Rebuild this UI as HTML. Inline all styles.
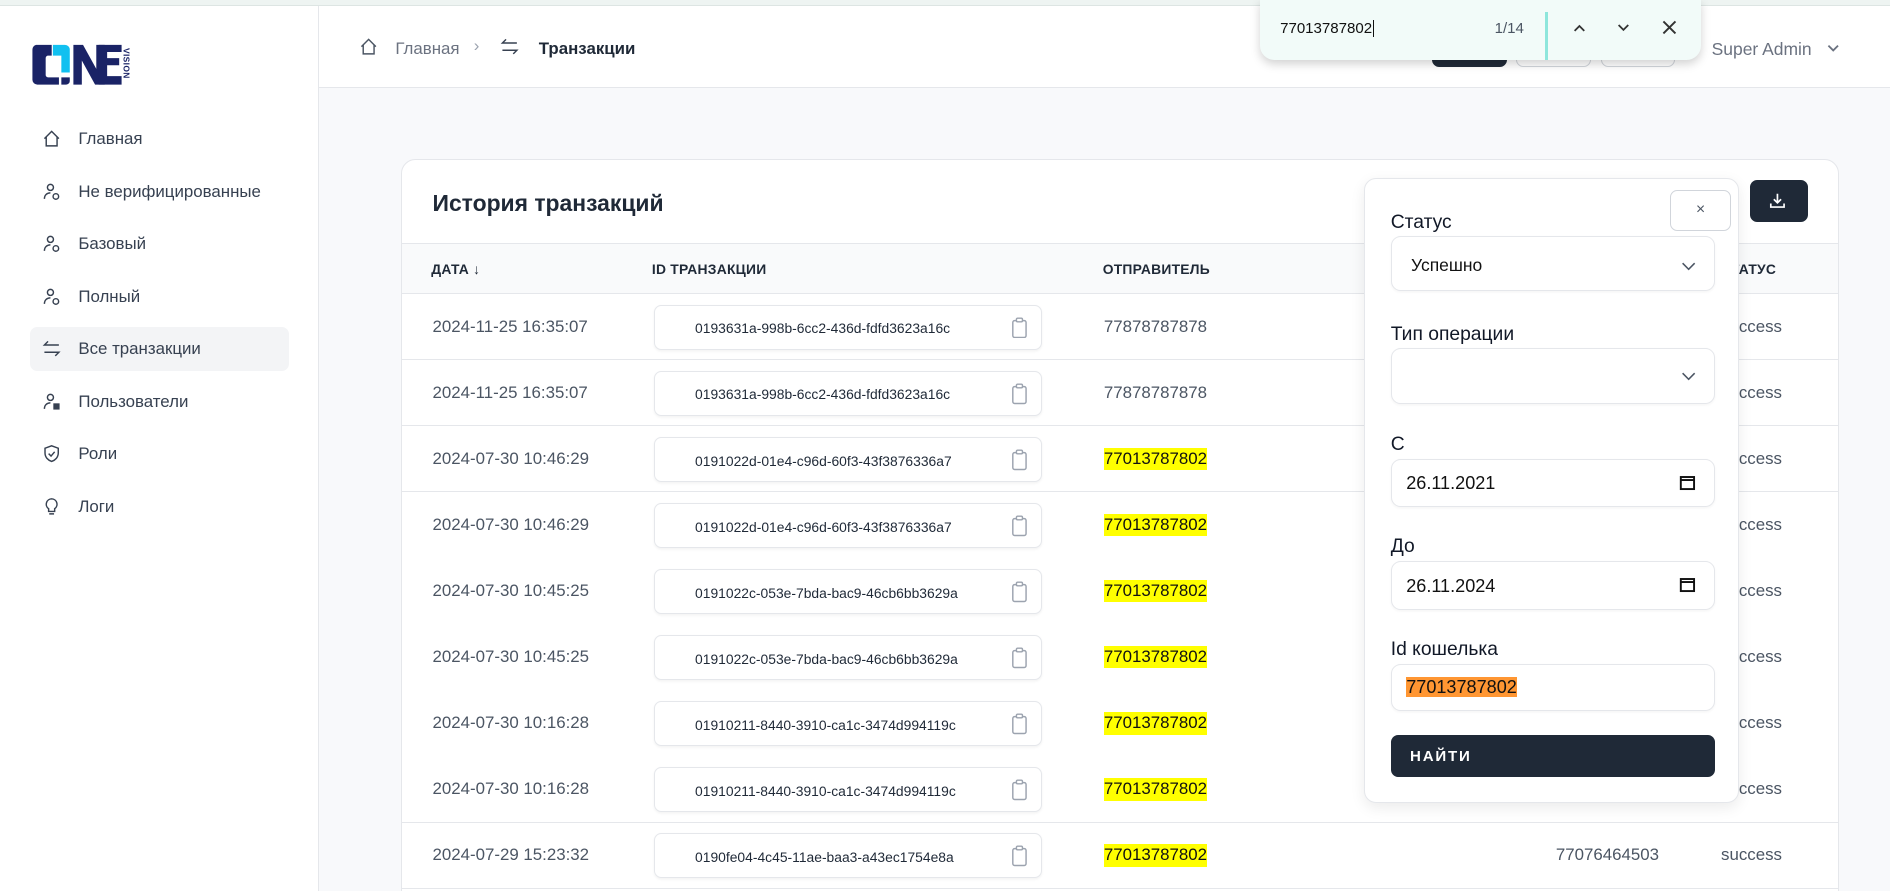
<!DOCTYPE html>
<html><head><meta charset="utf-8"><style>
*{box-sizing:border-box;margin:0;padding:0}
html,body{width:1890px;height:891px;overflow:hidden;background:#f8f9fb}
#w{zoom:1.20536;width:1568px;height:740px;position:relative;font-family:"Liberation Sans","Noto Sans CJK SC",sans-serif;color:#374151;overflow:hidden}
.a{position:absolute}
.top{left:0;top:0;width:1568px;height:5px;background:#eef4f2;border-bottom:1px solid #dde5e3}
.side{left:0;top:5px;width:265px;height:740px;background:#fff;border-right:1px solid #e5e7eb}
.nav{left:35px;font-size:14px;color:#374151;display:flex;align-items:center;gap:14px}
.nav svg{width:16px;height:16px}
.act{left:25px;top:271px;width:215px;height:37px;background:#f3f4f6;border-radius:6px}
.hdr{left:265px;top:5px;width:1303px;height:68px;background:#fff;border-bottom:1px solid #e5e7eb}
.card{left:333px;top:132px;width:1193px;height:640px;background:#fff;border:1px solid #e5e7eb;border-radius:12px;overflow:hidden}
.th{left:0;top:69px;width:1193px;height:42px;background:#f9fafb;border-top:1px solid #e5e7eb;border-bottom:1px solid #e5e7eb}
.th span{position:absolute;top:14px;font-size:11.5px;font-weight:bold;color:#1f2937;letter-spacing:.2px}
.row{left:0;width:1193px;height:55px;border-bottom:1px solid #e5e7eb}
.row .d{position:absolute;left:25px;top:19px;font-size:14px;color:#4b5563}
.row .id{position:absolute;left:209px;top:9px;width:322px;height:37px;border:1px solid #e5e7eb;border-radius:6px;box-shadow:0 1px 2px rgba(0,0,0,.05);font-size:11.5px;color:#1f2937;padding:12px 0 0 0;text-indent:33px}
.row .id svg{position:absolute;right:11px;top:9px}
.row .s{position:absolute;left:582px;top:19px;font-size:14px;color:#4b5563}
.row .s.h{color:#111;background:#ffff00;top:18px;padding:1px 0}
.row .r{position:absolute;left:957px;top:19px;font-size:14px;color:#4b5563}
.row .st{position:absolute;left:1094px;top:19px;font-size:14px;color:#4b5563}
.panel{left:1132px;top:148px;width:311px;height:518px;background:#fff;border:1px solid #e5e7eb;border-radius:10px;box-shadow:0 4px 12px rgba(0,0,0,.08)}
.lbl{left:21px;font-size:16px;color:#111827}
.inp{left:21px;width:269px;background:#fff;border:1px solid #e5e7eb;border-radius:8px;box-shadow:0 1px 2px rgba(0,0,0,.04);font-size:14.5px;color:#111}
.find{left:1045px;top:0;width:366px;height:50px;background:#f2fbf9;border-radius:0 0 12px 12px;box-shadow:0 3px 8px rgba(0,0,0,.18)}
</style></head><body><div id="w">
<div class="a top"></div>
<div class="a side"></div>
<svg class="a" style="left:25px;top:33px" width="78" height="40" viewBox="0 0 78 40">
<path d="M5 4h13v9h-3a2 2 0 0 0-2 2v14a2 2 0 0 0 2 2h9v6H6a4 4 0 0 1-4-4V8a4 4 0 0 1 3-4z" fill="#1a2366"/>
<path d="M19 4h10a4 4 0 0 1 4 4v19h-7V13h-7z" fill="#11c0f0"/>
<path d="M26 31h7v3a3 3 0 0 1-3 3h-4z" fill="#1a2366"/>
<path d="M36 4h8l11 20V4h7v33h-8L43 17v20h-7z" fill="#1a2366"/>
<path d="M57 4h19v6H64v5h10v6H64v9h12v7H57z" fill="#1a2366"/>
</svg>
<div class="a" style="left:101px;top:40px;font-size:7px;font-weight:bold;color:#1a2366;writing-mode:vertical-rl;letter-spacing:.3px">VISION</div>
<div class="a act"></div>
<div class="a nav" style="top:107px"><svg viewBox="0 0 16 16" fill="none" stroke="#374151" stroke-width="1.2"><path d="M2 8L8 2l6 6M3.5 6.5V14h9V6.5"/></svg>Главная</div>
<div class="a nav" style="top:151px"><svg viewBox="0 0 16 16" fill="none" stroke="#374151" stroke-width="1.2"><circle cx="7" cy="4.5" r="2.5"/><path d="M2 14c0-3 2-5 5-5"/><circle cx="11.5" cy="12" r="2.3"/></svg>Не верифицированные</div>
<div class="a nav" style="top:194px"><svg viewBox="0 0 16 16" fill="none" stroke="#374151" stroke-width="1.2"><circle cx="7" cy="4.5" r="2.5"/><path d="M2 14c0-3 2-5 5-5"/><circle cx="11.5" cy="12" r="2.3"/></svg>Базовый</div>
<div class="a nav" style="top:238px"><svg viewBox="0 0 16 16" fill="none" stroke="#374151" stroke-width="1.2"><circle cx="7" cy="4.5" r="2.5"/><path d="M2 14c0-3 2-5 5-5"/><circle cx="11.5" cy="12" r="2.3"/></svg>Полный</div>
<div class="a nav" style="top:281px"><svg viewBox="0 0 16 16" fill="none" stroke="#374151" stroke-width="1.2"><path d="M14 5H2l3-3M2 11h12l-3 3"/></svg>Все транзакции</div>
<div class="a nav" style="top:325px"><svg viewBox="0 0 16 16" fill="none" stroke="#374151" stroke-width="1.2"><circle cx="7" cy="4.5" r="2.5"/><path d="M2 14c0-3 2-5 5-5"/><rect x="10" y="10" width="4" height="4" fill="#374151"/></svg>Пользователи</div>
<div class="a nav" style="top:368px"><svg viewBox="0 0 16 16" fill="none" stroke="#374151" stroke-width="1.2"><path d="M8 1.5l5.5 2v4c0 3.5-2.5 6-5.5 7-3-1-5.5-3.5-5.5-7v-4z"/><path d="M5.5 8l2 2 3-3.5"/></svg>Роли</div>
<div class="a nav" style="top:412px"><svg viewBox="0 0 16 16" fill="none" stroke="#374151" stroke-width="1.2"><path d="M8 1.5a4.5 4.5 0 0 0-2.5 8.2V12h5V9.7A4.5 4.5 0 0 0 8 1.5zM6 14h4"/></svg>Логи</div>

<div class="a hdr"></div>
<svg class="a" style="left:298px;top:31px" width="16" height="16" viewBox="0 0 16 16" fill="none" stroke="#4b5563" stroke-width="1.2"><path d="M2 8L8 2l6 6M3.5 6.5V14h9V6.5"/></svg>
<div class="a" style="left:328px;top:32px;font-size:14px;color:#6b7280">Главная</div>
<div class="a" style="left:393px;top:30px;font-size:14px;color:#9ca3af">›</div>
<svg class="a" style="left:415px;top:31px" width="16" height="16" viewBox="0 0 16 16" fill="none" stroke="#374151" stroke-width="1.2"><path d="M14 5H2l3-3M2 11h12l-3 3"/></svg>
<div class="a" style="left:447px;top:32px;font-size:14px;font-weight:bold;color:#1f2937">Транзакции</div>
<div class="a" style="left:1188px;top:38px;width:62px;height:18px;background:#1f2937;border-radius:6px"></div>
<div class="a" style="left:1258px;top:38px;width:62px;height:18px;border:1px solid #d1d5db;border-radius:6px"></div>
<div class="a" style="left:1328px;top:38px;width:62px;height:18px;border:1px solid #d1d5db;border-radius:6px"></div>
<div class="a" style="left:1420px;top:32px;font-size:14.5px;color:#6b7280">Super Admin</div>
<svg class="a" style="left:1515px;top:35px" width="12" height="10" viewBox="0 0 12 10" fill="none" stroke="#6b7280" stroke-width="1.5"><path d="M2 3l4 4 4-4"/></svg>

<div class="a card">
<div class="a" style="left:25px;top:25px;font-size:19px;font-weight:bold;color:#1f2937">История транзакций</div>
<div class="a th"><span style="left:24px">ДАТА ↓</span><span style="left:207px">ID ТРАНЗАКЦИИ</span><span style="left:581px">ОТПРАВИТЕЛЬ</span><span style="left:1094px">СТАТУС</span></div>
</div>
<div id="rows"></div>

<div class="a" style="left:1452px;top:149px;width:48px;height:35px;background:#1f2937;border-radius:6px"></div>
<svg class="a" style="left:1468px;top:159px" width="14" height="14" viewBox="0 0 14 14" fill="none" stroke="#fff" stroke-width="1.4"><path d="M7 1.5v7M4 6l3 3 3-3M1.5 9.5v3h11v-3"/></svg>

<div class="a panel">
<div class="a" style="left:253px;top:9px;width:50px;height:34px;border:1px solid #d1d5db;border-radius:6px;text-align:center;font-size:13px;line-height:32px;color:#4b5563">×</div>
<div class="a lbl" style="top:27px">Статус</div>
<div class="a inp" style="top:47px;height:46px;padding:15px 0 0 16px">Успешно</div>
<div class="a lbl" style="top:120px">Тип операции</div>
<div class="a inp" style="top:140px;height:46px"></div>
<div class="a lbl" style="top:211px">С</div>
<div class="a inp" style="top:232px;height:40px;padding:11px 0 0 12px;font-size:15px">26.11.2021</div>
<div class="a lbl" style="top:296px">До</div>
<div class="a inp" style="top:317px;height:40px;padding:11px 0 0 12px;font-size:15px">26.11.2024</div>
<div class="a lbl" style="top:381px">Id кошелька</div>
<div class="a inp" style="top:402px;height:39px;padding:10px 0 0 12px;font-size:15px"><span style="background:#ff9632;color:#111">77013787802</span></div>
<div class="a" style="left:21px;top:461px;width:269px;height:35px;background:#1f2937;border-radius:6px;color:#fff;font-size:12.5px;font-weight:bold;letter-spacing:1.5px;padding:11px 0 0 16px">НАЙТИ</div>
</div>
<svg class="a" style="left:1393px;top:212px" width="16" height="16" viewBox="0 0 16 16" fill="none" stroke="#4b5563" stroke-width="1.3"><path d="M3 6l5 5 5-5"/></svg>
<svg class="a" style="left:1393px;top:304px" width="16" height="16" viewBox="0 0 16 16" fill="none" stroke="#4b5563" stroke-width="1.3"><path d="M3 6l5 5 5-5"/></svg>
<svg class="a" style="left:1393px;top:393px" width="14" height="14" viewBox="0 0 14 14" fill="none" stroke="#111" stroke-width="1.6"><rect x="1.5" y="2.5" width="11" height="10"/><path d="M1.5 5h11"/></svg>
<svg class="a" style="left:1393px;top:478px" width="14" height="14" viewBox="0 0 14 14" fill="none" stroke="#111" stroke-width="1.6"><rect x="1.5" y="2.5" width="11" height="10"/><path d="M1.5 5h11"/></svg>

<div class="a find">
<div class="a" style="left:17px;top:17px;font-size:12.5px;color:#111">77013787802<span style="border-left:1px solid #111;margin-left:1px"></span></div>
<div class="a" style="left:195px;top:17px;font-size:12.5px;color:#4b5563">1/14</div>
<div class="a" style="left:237px;top:10px;width:2px;height:40px;background:#8ee6dc"></div>
<svg class="a" style="left:258px;top:17px" width="14" height="14" viewBox="0 0 14 14" fill="none" stroke="#333" stroke-width="1.5"><path d="M3 9l4-4 4 4"/></svg>
<svg class="a" style="left:295px;top:16px" width="14" height="14" viewBox="0 0 14 14" fill="none" stroke="#333" stroke-width="1.5"><path d="M3 5l4 4 4-4"/></svg>
<svg class="a" style="left:333px;top:16px" width="14" height="14" viewBox="0 0 14 14" fill="none" stroke="#333" stroke-width="1.6"><path d="M2 2l10 10M12 2L2 12"/></svg>
</div>
</div>
<script>
var data=[["2024-11-25 16:35:07","0193631a-998b-6cc2-436d-fdfd3623a16c","77878787878"],["2024-11-25 16:35:07","0193631a-998b-6cc2-436d-fdfd3623a16c","77878787878"],["2024-07-30 10:46:29","0191022d-01e4-c96d-60f3-43f3876336a7","h"],["2024-07-30 10:46:29","0191022d-01e4-c96d-60f3-43f3876336a7","h"],["2024-07-30 10:45:25","0191022c-053e-7bda-bac9-46cb6bb3629a","h"],["2024-07-30 10:45:25","0191022c-053e-7bda-bac9-46cb6bb3629a","h"],["2024-07-30 10:16:28","01910211-8440-3910-ca1c-3474d994119c","h"],["2024-07-30 10:16:28","01910211-8440-3910-ca1c-3474d994119c","h"],["2024-07-29 15:23:32","0190fe04-4c45-11ae-baa3-a43ec1754e8a","h"]];
var h='';
var clip='<svg width="14" height="18" viewBox="0 0 14 18" fill="none" stroke="#9ca3af" stroke-width="1.2"><rect x="1.5" y="3" width="11" height="14" rx="1.5"/><rect x="4.5" y="1" width="5" height="3" rx="1" fill="#fff"/></svg>';
data.forEach(function(r,i){
 var s=r[2]=='h'?'<span class="s h">77013787802</span>':'<span class="s">'+r[2]+'</span>';
 var ex=i==8?'<span class="r">77076464503</span>':'';
 h+='<div class="a row" style="left:333px;width:1193px;top:'+(244+i*54.8)+'px;background:#fff;border-left:1px solid #e5e7eb;border-right:1px solid #e5e7eb"><span class="d">'+r[0]+'</span><div class="id">'+r[1]+clip+'</div>'+s+ex+'<span class="st">success</span></div>';
});
document.getElementById('rows').outerHTML=h;
</script>
</body></html>
